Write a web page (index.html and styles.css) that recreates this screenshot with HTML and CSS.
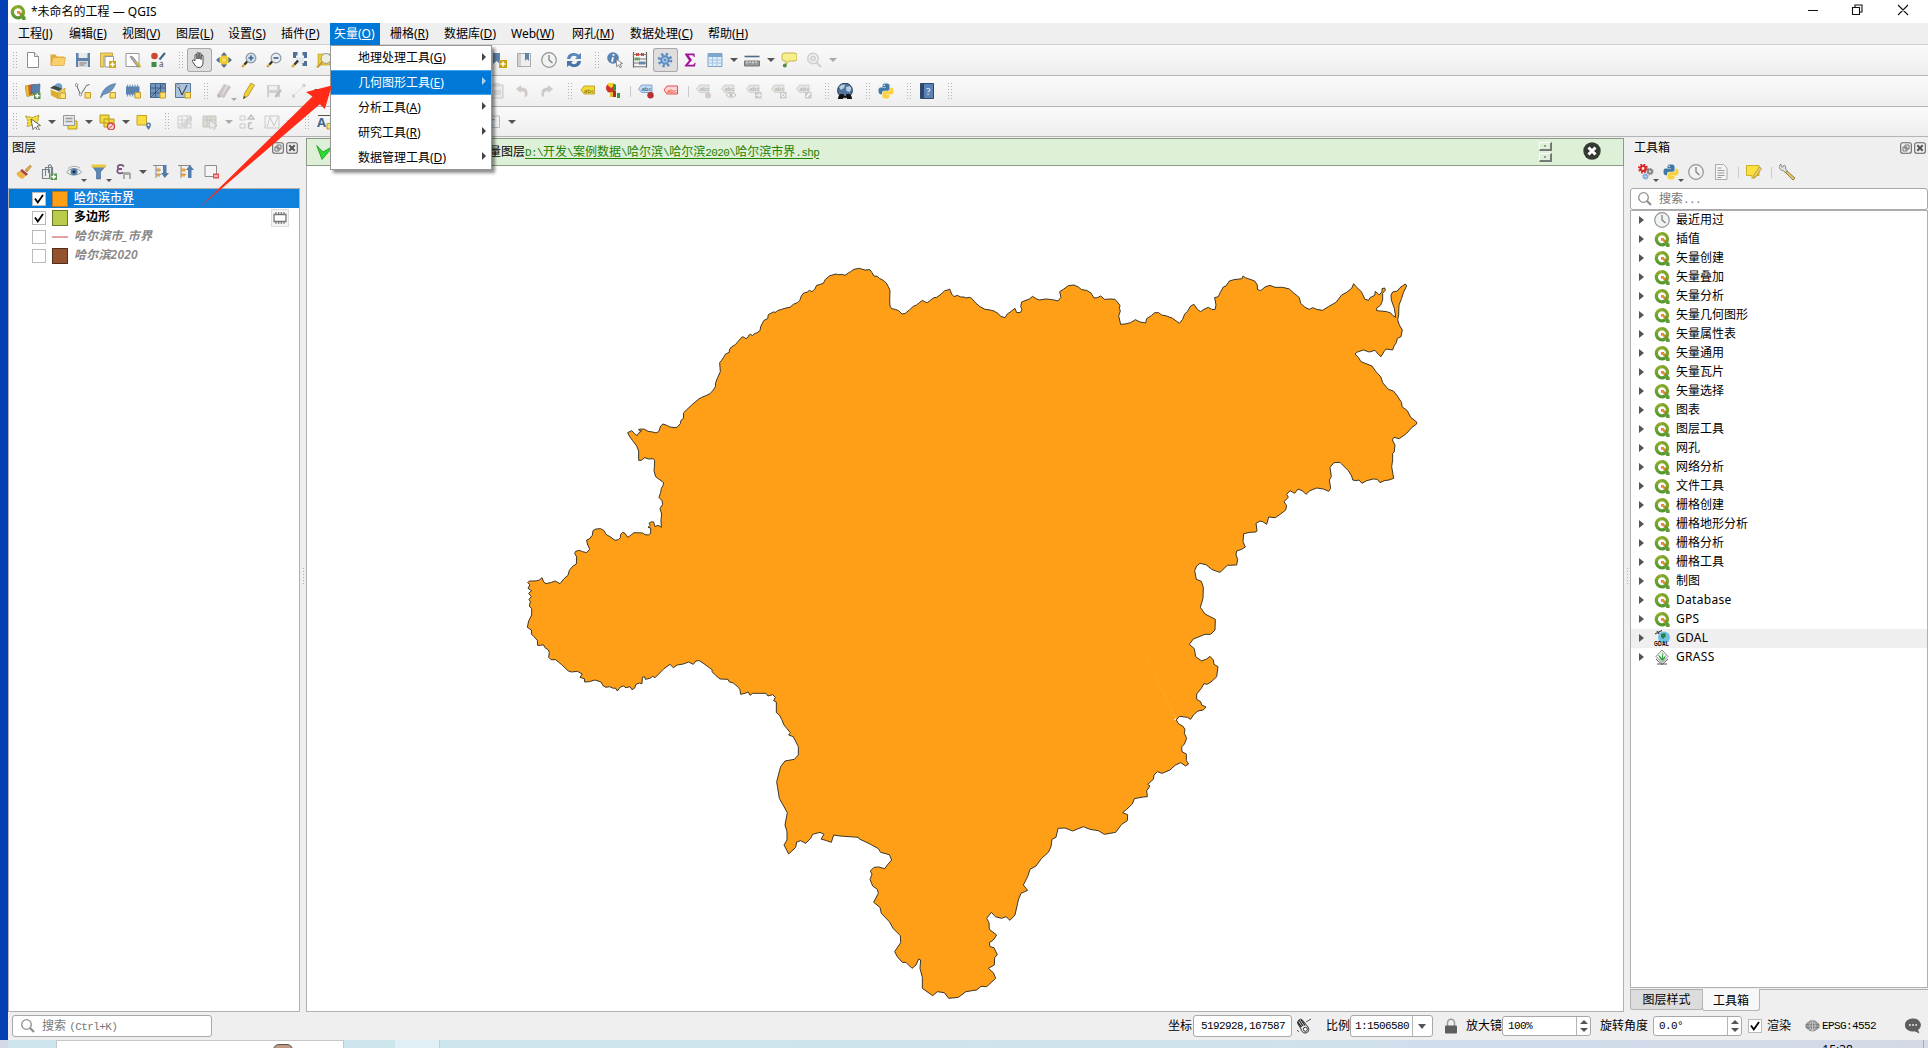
FILE: index.html
```html
<!DOCTYPE html>
<html lang="zh-CN">
<head>
<meta charset="utf-8">
<title>*未命名的工程 — QGIS</title>
<link rel="stylesheet" href="styles.css">
</head>
<body>
<svg class="defs" aria-hidden="true">
<defs>
<linearGradient id="gq" x1="0" y1="0" x2="0" y2="1"><stop offset="0" stop-color="#8fae2b"/><stop offset="1" stop-color="#55962f"/></linearGradient>
<symbol id="q" viewBox="0 0 16 16"><path d="M8 2.6a5.6 5.6 0 1 0 3 10.3" fill="none" stroke="url(#gq)" stroke-width="3.2"/><path d="M8 2.6a5.6 5.6 0 0 1 4.6 8.6" fill="none" stroke="#7fa52c" stroke-width="3.2"/><path d="M8.4 8.6h3l4.2 4.6V16h-3.2z" fill="#5f9c33"/><path d="M7 7h3.4L9.6 8.2l2 2-1 1.2-2-2L7 10z" fill="#f0822a"/></symbol>
<symbol id="new" viewBox="0 0 16 16"><path d="M2.5.5h7l4 4v11h-11z" fill="#fff" stroke="#8d8d8d"/><path d="M9.5.5v4h4" fill="#eee" stroke="#8d8d8d"/></symbol>
<symbol id="open" viewBox="0 0 16 16"><path d="M.5 13V2.5h5l1.5 2h7V13z" fill="#e0a93a"/><path d="M1 13.5l2-8h12.5l-1.5 8z" fill="#f8cf6b" stroke="#dfa53a" stroke-width=".7"/></symbol>
<symbol id="save" viewBox="0 0 16 16"><path d="M1 1h14v14H1z" fill="#5f82ab"/><path d="M3.5 1h9v5h-9z" fill="#e8eaec"/><path d="M3 9h10v6H3z" fill="#d4d8dc"/><path d="M4.5 11h7M4.5 13h5" stroke="#7d7d7d"/></symbol>
<symbol id="layout" viewBox="0 0 16 16"><path d="M.5 1h12v3H4v11H.5z" fill="#f2d35e" stroke="#b39127" stroke-width=".7"/><path d="M5 4.500h8.500V15H5z" fill="#fff" stroke="#999"/><path d="M9 9h7v7H9z" fill="#cda910"/><path d="M12.500 10.300v4.400M10.300 12.500h4.400" stroke="#fff" stroke-width="1.500"/></symbol>
<symbol id="layman" viewBox="0 0 16 16"><path d="M1 1.500h13v13H1z" fill="#fff" stroke="#999"/><path d="M5 4l3 1 6.500 8.500-1.500 2L6.500 7z" fill="#a8a8a8" stroke="#777" stroke-width=".6"/><path d="M11 10l4.500 5" stroke="#d8b43b" stroke-width="2"/></symbol>
<symbol id="style" viewBox="0 0 16 16"><circle cx="4.500" cy="4" r="3.300" fill="#d2492f"/><path d="M1.500 10h5v5h-5z" fill="#3f8a45"/><path d="M9.500 7.500L15 1" stroke="#3f6a8d" stroke-width="2.200"/><text x="9" y="15" font-size="8" fill="#444" font-family="Noto Sans">a</text></symbol>
<symbol id="hand" viewBox="0 0 16 16"><path d="M4 9V3.500a1 1 0 0 1 2 0V7 1.500a1 1 0 0 1 2 0V7 2a1 1 0 0 1 2 0v5.500V4a1 1 0 0 1 2 0v6.500c0 3-1.500 5-4 5-3 0-4-2-6.500-6.200C1 7.500 2.500 7.200 4 9z" fill="#fff" stroke="#222" stroke-width=".8"/></symbol>
<symbol id="pan" viewBox="0 0 16 16"><path d="M5 3h6v2h2v6h-2v2H5v-2H3V5h2z" fill="#edca2e"/><path d="M8 0l3 3.500H5zM8 16l3-3.500H5zM0 8l3.500-3v6zM16 8l-3.500-3v6z" fill="#4d7097"/><path d="M6.500 6.500h3v3h-3z" fill="#f9e57b"/></symbol>
<symbol id="zin" viewBox="0 0 16 16"><path d="M6.500 9.500L1 15" stroke="#d4a63d" stroke-width="2.400"/><path d="M6.500 9L3.500 12.500" stroke="#333" stroke-width="2"/><circle cx="10" cy="6" r="4.900" fill="#cfe0ef" stroke="#8b949d" stroke-width="1.100"/><path d="M7.500 6h5M10 3.500v5" stroke="#44668c" stroke-width="1.700"/></symbol>
<symbol id="zout" viewBox="0 0 16 16"><path d="M6.500 9.500L1 15" stroke="#d4a63d" stroke-width="2.400"/><path d="M6.500 9L3.500 12.500" stroke="#333" stroke-width="2"/><circle cx="10" cy="6" r="4.900" fill="#e7edf3" stroke="#8b949d" stroke-width="1.100"/><path d="M7.500 6h5" stroke="#44668c" stroke-width="1.700"/></symbol>
<symbol id="zfull" viewBox="0 0 16 16"><path d="M5 5h8v7H5z" fill="#e2e8ee"/><path d="M2 0h4.500v3.500H5V6H2zM16 0v6h-3V3.500h-1.500V0zM16 14h-4.500v-3H13V9h3z" fill="#4e7198"/><path d="M7 9l-6 6" stroke="#d4a63d" stroke-width="2.400"/><path d="M7 8.500L3.500 12.500" stroke="#333" stroke-width="2"/></symbol>
<symbol id="zsel" viewBox="0 0 16 16"><path d="M2 2h12v11H2z" fill="#e9cd38" stroke="#b89818" stroke-width=".6"/><circle cx="10" cy="6.500" r="4.900" fill="#efeee0" stroke="#9a9a92"/><path d="M6.500 10L1 15.500" stroke="#c79c38" stroke-width="2.200"/></symbol>
<symbol id="bknew" viewBox="0 0 16 16"><path d="M2 1h7v11l-3.500-3L2 12z" fill="#5f82ab"/><path d="M8 8h8v8H8z" fill="#c9a40c"/><path d="M12 9.500v5M9.500 12h5" stroke="#fff" stroke-width="1.600"/></symbol>
<symbol id="book" viewBox="0 0 16 16"><path d="M1.500 1.500h13v13h-13z" fill="#eee" stroke="#aaa"/><path d="M2 2h3v12H2z" fill="#d0d0d0"/><path d="M9 1h4v8l-2-2-2 2z" fill="#5f82ab"/></symbol>
<symbol id="clock" viewBox="0 0 16 16"><circle cx="8" cy="8" r="7.300" fill="#f1f3f3" stroke="#8e9494" stroke-width="1.200"/><path d="M8 3v5l3.500 3" fill="none" stroke="#777" stroke-width="1.200"/></symbol>
<symbol id="refresh" viewBox="0 0 16 16"><path d="M1 7c.5-4 3-6 7-6 2 0 3.500.7 4.700 1.800L15 1v6H9l2-2C8 2.800 5 4 4.500 7z" fill="#5a87ba"/><path d="M15 9c-.5 4-3 6-7 6-2 0-3.500-.7-4.700-1.800L1 15V9h6l-2 2c3 2.200 6 1 6.500-2z" fill="#4675aa"/></symbol>
<symbol id="info" viewBox="0 0 16 16"><circle cx="6" cy="6" r="5.800" fill="#5884b4"/><path d="M6.500 2v1.800M6 5.200L5 9.800" stroke="#fff" stroke-width="1.800"/><path d="M9 7l6.500 4.500-2.600.6 1.600 2.900-1.400.8-1.600-2.900-1.800 1.700z" fill="#fff" stroke="#555" stroke-width=".7"/></symbol>
<symbol id="abacus" viewBox="0 0 16 16"><path d="M1.500 0v15.500M14.500 0v15.500" stroke="#666" stroke-width="1.200"/><path d="M1 2.500h14M1 7h14M1 11h14M1 14.800h14" stroke="#777"/><path d="M4 2.500h3M9 2.500h3" stroke="#cf3c32" stroke-width="3" stroke-dasharray="1.300 .3"/><path d="M3 7h5" stroke="#4ca957" stroke-width="3" stroke-dasharray="1.400 .3"/><path d="M7 11h6" stroke="#4e7fae" stroke-width="3" stroke-dasharray="1.400 .3"/></symbol>
<symbol id="gear" viewBox="0 0 16 16"><circle cx="8" cy="8" r="5.600" fill="none" stroke="#5d8dc4" stroke-width="3.400" stroke-dasharray="2.200 2.198"/><circle cx="8" cy="8" r="3.700" fill="#a9c5e6" stroke="#5d8dc4" stroke-width="2"/><circle cx="8" cy="8" r="1.300" fill="#5d8dc4"/></symbol>
<symbol id="sigma" viewBox="0 0 16 16"><path d="M3 1.500h9.500l.3 3.500h-1c-.3-1.500-.8-1.800-2.200-1.800H6.500L10 8l-4 4.700h4.300c1.300 0 1.800-.5 2.300-2h1L13 14.500H2.800v-1L7 8.500l-4-6z" fill="#a1149b"/></symbol>
<symbol id="table" viewBox="0 0 16 16"><path d="M1 1.500h14v13H1z" fill="#dcecf9" stroke="#7fa3c4"/><path d="M1 2h14v3H1z" fill="#7da7d0"/><path d="M5.500 5v9.500M1 8h14M1 11h14M10 5v9.500" stroke="#a6c4df"/></symbol>
<symbol id="meas" viewBox="0 0 16 16"><path d="M.5 4.500h15" stroke="#4f6c89" stroke-width="1.600"/><path d="M.5 9h15v5H.5z" fill="#999" stroke="#777"/><path d="M3 9v2.500M6 9v2M9 9v2.500M12 9v2" stroke="#eee"/></symbol>
<symbol id="tip" viewBox="0 0 16 16"><path d="M3.500 1h10a2.500 2.500 0 0 1 2.500 2.500v3A2.500 2.500 0 0 1 13.500 9H8l-3 3.500L5 9H3.500A2.500 2.500 0 0 1 1 6.500v-3A2.500 2.500 0 0 1 3.500 1z" fill="#f7ee8d" stroke="#b5a436" stroke-width=".8"/><circle cx="3.800" cy="13.500" r="2" fill="#56894a"/></symbol>
<symbol id="zgray" viewBox="0 0 16 16"><circle cx="7" cy="6.500" r="5.300" fill="#eee" stroke="#cfcfcf" stroke-width="1.500"/><circle cx="7" cy="6.500" r="2" fill="none" stroke="#cfcfcf" stroke-width="1.500"/><path d="M10 10l5 5" stroke="#d0d0d0" stroke-width="2"/></symbol>
<symbol id="dsm" viewBox="0 0 16 16"><path d="M0 3l7-1 2 10-7 1.500z" fill="#efc22d" stroke="#9f7c12" stroke-width=".6"/><path d="M3 2l7-1v8l-6 4z" fill="#d2642c"/><path d="M6 2l9-1-.5 9.500L6 11z" fill="#587ea8" stroke="#3f6088" stroke-width=".6"/><path d="M9 9.500h6.500V16H9z" fill="#5a9150"/><path d="M12.200 10.500v4.500M10 12.700h4.500" stroke="#fff" stroke-width="1.600"/></symbol>
<symbol id="gpkg" viewBox="0 0 16 16"><circle cx="8.500" cy="4" r="3.800" fill="#69a0cc"/><path d="M0 5l4-2.500 8 3L9 8z" fill="#3f4d40"/><path d="M.5 6.500L8 9.500V16L1 12.500z" fill="#e0ae2f"/><path d="M8 9.500L15 5v7.500L8 16z" fill="#f1cd5f" stroke="#a97d16" stroke-width=".5"/><path d="M10 10h5.500v5.500H10z" fill="#fbe57b" stroke="#c79b20"/></symbol>
<symbol id="shp" viewBox="0 0 16 16"><path d="M1.500 2l4 10 6-9.500 3-1" fill="none" stroke="#666"/><circle cx="1.500" cy="2" r="1.400" fill="#eee" stroke="#777" stroke-width=".7"/><circle cx="5.500" cy="11.500" r="1.400" fill="#eee" stroke="#777" stroke-width=".7"/><path d="M10 9.500h5.500V15H10z" fill="#fbe06c" stroke="#c59a21"/></symbol>
<symbol id="feather" viewBox="0 0 16 16"><path d="M.5 15C2 7 7 2 15.500.5 14 6 10 10 3.500 11.500z" fill="#6a93bd" stroke="#456c96" stroke-width=".6"/><path d="M10 9.500h5.500V15H10z" fill="#fbe06c" stroke="#c59a21"/></symbol>
<symbol id="mem" viewBox="0 0 16 16"><path d="M2.500 1.500v12M5 1.500v12M7.500 1.500v12M10 1.500v12M12.500 1.500v12" stroke="#7b9dc1" stroke-width="1.200"/><path d="M1 3.500h13.500v8H1z" fill="#5b83b0"/><path d="M10 9.500h5.500V15H10z" fill="#fbe06c" stroke="#c59a21"/></symbol>
<symbol id="vgrid" viewBox="0 0 16 16"><path d="M.5.500h15v14H.5z" fill="#7598be" stroke="#46668a"/><path d="M1 5h14M1 10h14M5.500 1v13M10.500 1v13M1 14L14 1" stroke="#335276" stroke-width=".8"/><path d="M10 9.500h5.500V15H10z" fill="#fbe06c" stroke="#c59a21"/></symbol>
<symbol id="vvirt" viewBox="0 0 16 16"><path d="M.5.500h15v14H.5z" fill="#a9c4e0" stroke="#5a7797"/><path d="M3 3l4 9 5-10" fill="none" stroke="#333"/><circle cx="3" cy="3" r="1.300" fill="#fff" stroke="#555" stroke-width=".6"/><path d="M10 9.500h5.500V15H10z" fill="#fbe06c" stroke="#c59a21"/></symbol>
<symbol id="edits" viewBox="0 0 16 16"><path d="M1 12L8 1l3 1-6 11zM5 14L12 2l3 2-7 11z" fill="#cbc5c4"/><path d="M1 11l5 2-4 2z" fill="#b9b2b1"/></symbol>
<symbol id="pencil" viewBox="0 0 16 16"><path d="M3.500 10.500L10 0l3.500 2.200L7 13l-4.500 2.800z" fill="#f0cf3c" stroke="#a58515" stroke-width=".7"/><path d="M3 13l2 1-3 2z" fill="#444"/></symbol>
<symbol id="savg" viewBox="0 0 16 16"><path d="M1 2h13v12H1z" fill="#d0d0d0"/><path d="M3 3h8v4H3zM3 10h7v4H3z" fill="#efefef"/><path d="M9.500 14l5.500-7" stroke="#c0bab9" stroke-width="2.200"/></symbol>
<symbol id="nodes" viewBox="0 0 16 16"><path d="M2 13L13 2.500" stroke="#cbcbcb" stroke-dasharray="2 1.500"/><circle cx="2.500" cy="13" r="1.700" fill="#cfcfcf"/><circle cx="13" cy="2.500" r="1.700" fill="#cfcfcf"/></symbol>
<symbol id="paste" viewBox="0 0 16 16"><path d="M2 2h12v13H2z" fill="#eaeaea" stroke="#c6c6c6"/><path d="M5 0h6v3.500H5zM5 7h7v5H5z" fill="#d6d6d6"/></symbol>
<symbol id="undo" viewBox="0 0 16 16"><path d="M2 6l5-4v2.500c5 0 7 2 6.500 7.500-1 2-3 2-3 2 1.500-4-.5-6-3.500-6V10z" fill="#d0cac8"/></symbol>
<symbol id="redo" viewBox="0 0 16 16"><path d="M14 6L9 2v2.500c-5 0-7 2-6.500 7.500 1 2 3 2 3 2C4 10 6 8 9 8v2z" fill="#c9cecb"/></symbol>
<symbol id="lab" viewBox="0 0 16 16"><path d="M1 7l3-4h10.500v8H4z" fill="#f4d936" stroke="#a98e11" stroke-width=".7"/><text x="4" y="9.500" font-size="6" fill="#7b6200" font-family="Noto Sans">abc</text></symbol>
<symbol id="diag" viewBox="0 0 16 16"><circle cx="6" cy="5" r="5" fill="#d0312b"/><path d="M6 5L2 1.500A5 5 0 0 1 10 2z" fill="#f1d429"/><path d="M8 1l3 .5V7L8 9z" fill="#37913c"/><path d="M5 9h3v5H5z" fill="#e5bd25"/><path d="M8 8h3v6H8z" fill="#af2924"/><path d="M12 10h3v5h-3z" fill="#3b9440"/></symbol>
<symbol id="labb" viewBox="0 0 16 16"><path d="M.5 6l3-4H14v7.500H3.500z" fill="#c1dbf4" stroke="#5c8cba" stroke-width=".7"/><text x="3.500" y="8" font-size="6" fill="#345" font-family="Noto Sans">abc</text><circle cx="12.500" cy="12.300" r="3.200" fill="#b82e35"/></symbol>
<symbol id="labr" viewBox="0 0 16 16"><path d="M1 7l3-4h10.500v8H4z" fill="#fbd6d4" stroke="#ec4b4b"/><text x="4" y="9.500" font-size="6" fill="#e33" font-family="Noto Sans">abc</text></symbol>
<symbol id="labg" viewBox="0 0 16 16"><path d="M.5 6l3-4H13v7.500H3.500z" fill="#e4e4e0" stroke="#c7c7c3" stroke-width=".7"/><text x="3.500" y="8" font-size="6" fill="#aaa" font-family="Noto Sans">abc</text></symbol>
<symbol id="globe" viewBox="0 0 16 16"><circle cx="8" cy="7.500" r="7.400" fill="#50749b" stroke="#273b51"/><path d="M2 4l3-2.500 3 .5-1 3-3 2zM9 4l4-1 1.500 3-2 3-3-1z" fill="#b8cde1"/><path d="M1 16c0-3 1.500-5 3.500-5h2l.6 2h1.800l.6-2h2c2 0 3.500 2 3.500 5h-5l-.5-2h-3L6 16z" fill="#111"/></symbol>
<symbol id="py" viewBox="0 0 16 16"><path d="M4.500 4V2.500C4.500.8 6 .5 8 .5s3.500.5 3.500 2v3.300c0 1.200-.8 1.900-1.800 1.900H6c-1.500 0-2 1-2 2v1.500H2.500C1 11.200.5 9.500.5 7.800S1 4.500 2.500 4.500H8V4z" fill="#3f77a7"/><path d="M11.500 12v1.500c0 1.700-1.500 2-3.500 2s-3.500-.5-3.500-2v-3.300c0-1.200.8-1.900 1.800-1.900H10c1.500 0 2-1 2-2V4.800h1.500c1.500 0 2 1.700 2 3.400s-.5 3.300-2 3.300H8v.5z" fill="#f9d13e"/><circle cx="6.200" cy="2.300" r=".8" fill="#fff"/></symbol>
<symbol id="help" viewBox="0 0 16 16"><path d="M1.500.5h13v15h-13z" fill="#5a82b5" stroke="#2f4a6c"/><path d="M2 1h3v14H2z" fill="#2d4768"/><text x="7" y="12" font-size="10" fill="#fff" font-family="Liberation Serif">?</text></symbol>
<symbol id="sel" viewBox="0 0 16 16"><path d="M.5 2l7 1.500L14 1l-1 6-2 3.500-9 2L3 7z" fill="#f3da3a" stroke="#8f7b18" stroke-width=".8" stroke-dasharray="2 1"/><path d="M6 5l9.500 6.500-3.500.5 2.500 3.500-1.800 1-2.200-3.600-2.500 2.600z" fill="#fff" stroke="#444" stroke-width=".8"/></symbol>
<symbol id="selv" viewBox="0 0 16 16"><path d="M6 7h9v8H6z" fill="#f4da3a" stroke="#b89c1f"/><path d="M1.500 1.500h11v10h-11z" fill="#e5e7e9" stroke="#999"/><path d="M3.500 4.500h7M3.500 7.500h7" stroke="#999" stroke-width="1.300"/></symbol>
<symbol id="desel" viewBox="0 0 16 16"><path d="M1 1h9v8H1zM5 5h10v8H5z" fill="#f5db3d" stroke="#b3981e"/><circle cx="12" cy="12.500" r="3.500" fill="#f2dada" stroke="#cf3d3d" stroke-width="1.300"/><path d="M9.800 14.800l4.500-4.500" stroke="#cf3d3d"/></symbol>
<symbol id="selloc" viewBox="0 0 16 16"><path d="M1 1.500h9.500v9.500H1z" fill="#f8dd43" stroke="#c6a31e"/><path d="M12.500 16c-1.500-2.500-2.500-3.500-2.500-5a2.500 2.500 0 0 1 5 0c0 1.500-1 2.500-2.500 5z" fill="#587da5"/><circle cx="12.500" cy="11" r="1" fill="#fff"/></symbol>
<symbol id="dgrid" viewBox="0 0 16 16"><path d="M1 2h13v12H1zM1 6h13M1 10h13M5 2v12M10 2v12M1 14L14 2" fill="none" stroke="#cfcfcf"/><path d="M6 12l7-9 2 1.500-7 9z" fill="#ddd8d5" stroke="#c4c0be" stroke-width=".6"/></symbol>
<symbol id="dsel" viewBox="0 0 16 16"><path d="M1 2h13v11H1z" fill="#dcdcd6" stroke="#c6c6c2"/><path d="M1 6h13M5 2v11M9 2v11" stroke="#c5c5c0"/><path d="M7 6l8 6-3 .5 1.500 2.500-1.500 1-1.800-3-2 2z" fill="#eee" stroke="#bbb" stroke-width=".7"/></symbol>
<symbol id="dcalc" viewBox="0 0 16 16"><path d="M1 2h5v4H1zM1 10h5v4H1z" fill="none" stroke="#cacaca"/><path d="M12 1l3 4H9zM9 5h6M13 9c-4-1-5 2-2 2.500-3 1-2 4 3 3" fill="none" stroke="#bfbfbf" stroke-width="1.300"/></symbol>
<symbol id="dv" viewBox="0 0 16 16"><path d="M1 2h14v12H1zM3 13L6 3l4 9 4-9" fill="none" stroke="#c9c9c9"/></symbol>
<symbol id="anno" viewBox="0 0 16 16"><text x="0" y="13" font-size="13" font-weight="bold" fill="#456a92" font-family="Noto Sans">A</text><path d="M1 1.500h12" stroke="#555"/><path d="M10 9.500h5.500V15H10z" fill="#fbe06c" stroke="#c59a21"/></symbol>
<symbol id="tee" viewBox="0 0 16 16"><path d="M0 2h14.500v11.500H0z" fill="#f3f3f3" stroke="#b9bec3"/><text x="3" y="12" font-size="11" fill="#687887" font-family="Liberation Serif">T</text></symbol>
<symbol id="brush" viewBox="0 0 16 16"><path d="M9 6l5-5 1.500 1.500L11 8z" fill="#e2a84f" stroke="#a9732a" stroke-width=".5"/><path d="M6 5l6 5-2 2-6-5z" fill="#a8483c"/><path d="M3.500 7l6 5-3 3c-1.500-.5-3-1-3-2-2-.5-2.500-1.800-3-4z" fill="#ecb544"/></symbol>
<symbol id="addgrp" viewBox="0 0 16 16"><path d="M1.500 5.500h7v9h-7zM4.500 3v9M4.500 3.500h7V12M7.500 1v8M7.500 1.500c2-1.500 3 0 3 1.500v7" fill="none" stroke="#77828a" stroke-width="1.100"/><path d="M9.500 9.500H16V16H9.500z" fill="#5b9753"/><path d="M12.700 10.500v4.500M10.500 12.700H15" stroke="#fff" stroke-width="1.500"/></symbol>
<symbol id="eye" viewBox="0 0 16 16"><path d="M.5 8C4 3.500 12 3.500 15.500 8 12 12 4 12 .5 8z" fill="#eee" stroke="#959ca3"/><circle cx="8" cy="7.800" r="3.500" fill="#5580ac"/><circle cx="8" cy="7.800" r="1.500" fill="#1d3045"/><path d="M2 4.500C6 1.500 11 2 14 4" fill="none" stroke="#aaa"/></symbol>
<symbol id="funnel" viewBox="0 0 16 16"><path d="M1 2h13.500L9.500 8v7h-4V8z" fill="#5a86b6" stroke="#3e668f" stroke-width=".6"/><path d="M.5.500h14.500v3H.5z" fill="#edca37"/></symbol>
<symbol id="eps" viewBox="0 0 16 16"><path d="M8 2.500C5-.5 0 1 2.500 5 0 7 1.500 11 7.500 8.700M2.500 5H6" fill="none" stroke="#7d5480" stroke-width="1.800"/><path d="M8 15v-5h6v5M8 9h6" fill="none" stroke="#aaa" stroke-width="2"/></symbol>
<symbol id="expand" viewBox="0 0 16 16"><path d="M0 1.500h13M3 1.500V14M3 6h5M3 10.500h5" stroke="#8a8a8a" fill="none"/><path d="M4 4.500h3v3H4zM4 9.500h3v3H4z" fill="#e8a33d"/><path d="M10 1h3.500v8H16l-4.200 5L8 9h2z" fill="#537da9"/></symbol>
<symbol id="collapse" viewBox="0 0 16 16"><path d="M0 1.500h13M3 1.500V14M3 6h5M3 10.500h5" stroke="#8a8a8a" fill="none"/><path d="M4 4.500h3v3H4zM4 9.500h3v3H4z" fill="#e8a33d"/><path d="M10 14h3.500V6H16l-4.200-5L8 6h2z" fill="#537da9"/></symbol>
<symbol id="remove" viewBox="0 0 16 16"><path d="M2 1.500h11.500v11H2z" fill="#f5f5f5" stroke="#8d8d8d"/><path d="M10 9.500h6v5h-6z" fill="#ea4e4e"/><path d="M11.200 12h3.600" stroke="#fff" stroke-width="1.300"/></symbol>
<symbol id="gears" viewBox="0 0 16 16"><circle cx="5" cy="4.500" r="3.700" fill="none" stroke="#d62525" stroke-width="2.600" stroke-dasharray="1.600 1.306"/><circle cx="5" cy="4.500" r="2.500" fill="none" stroke="#d62525" stroke-width="2.200"/><circle cx="12" cy="7.500" r="2" fill="none" stroke="#888" stroke-width="2"/><circle cx="12" cy="7.500" r="3" fill="none" stroke="#888" stroke-width="1.300" stroke-dasharray="1 1.350"/><circle cx="7.500" cy="12.500" r="1.700" fill="none" stroke="#8eaedb" stroke-width="2"/><circle cx="7.500" cy="12.500" r="2.700" fill="none" stroke="#8eaedb" stroke-width="1.300" stroke-dasharray="1 1.120"/></symbol>
<symbol id="doc" viewBox="0 0 16 16"><path d="M2.500.500h8l3.500 3.500v11.500H2.500z" fill="#f5f5f5" stroke="#aaa"/><path d="M4.500 4h4M4.500 6.500h7M4.500 9h7M4.500 11.500h7M4.500 13.500h4" stroke="#999"/></symbol>
<symbol id="note" viewBox="0 0 16 16"><path d="M.5 1.500H13v10H9l-3 3v-3H.5z" fill="#fbe13f" stroke="#cfaf23"/><path d="M8 11l5.500-8L15.500 4.500 10 13l-2.500 1.500z" fill="#edd05d" stroke="#8f7b34" stroke-width=".6"/></symbol>
<symbol id="wrench" viewBox="0 0 16 16"><path d="M0 2l2-2 .3 2.700 1.700.3L5 1c2 1 2 3 1.500 4l1.700 1.800-2 2L4.500 6.500C2.500 7 .5 5.500 0 2z" fill="#e1e1e1" stroke="#777" stroke-width=".8"/><path d="M8 7l8 7-2 2-7.500-7.500z" fill="#e5c766" stroke="#7b6630" stroke-width=".8"/></symbol>
<symbol id="mag" viewBox="0 0 16 16"><circle cx="6.500" cy="6.500" r="4.800" fill="none" stroke="#8f8f8f" stroke-width="1.300"/><path d="M10 10l4 4" stroke="#8f8f8f" stroke-width="2.200"/></symbol>
<symbol id="float" viewBox="0 0 12 12"><rect x=".7" y=".7" width="10.600" height="10.600" rx="2" fill="none" stroke="#666" stroke-width="1.100"/><path d="M5 3h4v4H5zM3 5h4v4H3z" fill="#efefef" stroke="#666" stroke-width=".9"/></symbol>
<symbol id="close" viewBox="0 0 12 12"><rect x=".7" y=".7" width="10.600" height="10.600" rx="2" fill="none" stroke="#666" stroke-width="1.100"/><path d="M3.300 3.300l5.400 5.400M8.700 3.300L3.300 8.700" stroke="#555" stroke-width="2"/></symbol>
<symbol id="chip" viewBox="0 0 16 16"><path d="M4 2v12M6.700 2v12M9.300 2v12M12 2v12" stroke="#777" stroke-width="1.200"/><path d="M2 4.500h12v7H2z" fill="#fff" stroke="#777" stroke-width="1.300"/></symbol>
<symbol id="gdal" viewBox="0 0 16 16"><circle cx="10" cy="7.500" r="6" fill="#6fc3e2"/><path d="M7 4l4-1 1 3-3 3-2-2z" fill="#2f7d4c"/><path d="M1 4L8 .5M3 1l2 3" stroke="#444" stroke-width="1.300"/><text x="0" y="15.500" font-size="8" font-weight="bold" textLength="15" lengthAdjust="spacingAndGlyphs" fill="#000" font-family="Liberation Sans">GDAL</text></symbol>
<symbol id="grass" viewBox="0 0 16 16"><path d="M8 1l6 6.500-6 6-6-6z" fill="#f4fbf2" stroke="#777" stroke-width=".9"/><path d="M2 10l6 5.500L14 10M3 15h10" fill="none" stroke="#555"/><path d="M8 12C6 10 5 7.500 4 6c2 .5 3 2 4 3.500C8 7 8 5 9 3c.5 3 0 5-.3 6.500L12 6c-.5 3-2 5-4 6z" fill="#2f9a3e"/></symbol>
<symbol id="mouse" viewBox="0 0 16 16"><path d="M2 3c2-3 4-2 6 1l4 5c2 3 0 6-3 6-2 0-4-2-4-4L2 6z" fill="#e8e8e4" stroke="#333"/><path d="M3 2l4 6M5 1.500l4 6M1.500 4l4 5" stroke="#222" stroke-width="1.300"/><circle cx="9.300" cy="11.300" r="2" fill="#fff" stroke="#333"/><path d="M10 4l5-3M3 14L1 12" stroke="#555"/></symbol>
<symbol id="lock" viewBox="0 0 12 16"><path d="M2.500 8V5a3.500 3.800 0 0 1 7 0v3" fill="none" stroke="#9a9a9a" stroke-width="1.500"/><rect y="7.500" width="12" height="8" rx="1" fill="#5e5e5e"/></symbol>
<symbol id="crs" viewBox="0 0 16 16"><path d="M8 1C13 3 15 5 16 8c-1 3-4 5-8 6-4-1-7-3-8-6 1-3 3-5 8-7z" fill="#7c7c7c"/><path d="M0 8h16M2 4.800h12M2 11.200h12M8 1v13M8 1C4 5 4 10 8 14M8 1c4 4 4 9 0 13" fill="none" stroke="#ddd" stroke-width=".7"/></symbol>
<symbol id="chat" viewBox="0 0 16 16"><path d="M8 .5a7.800 6.500 0 0 1 5 11.500l1.500 3.500L9.500 13.300A7.800 6.500 0 1 1 8 .5z" fill="#5e5e5e"/><path d="M4 7h1.700M7.200 7h1.700M10.400 7H12" stroke="#fff" stroke-width="1.700"/></symbol>
<symbol id="ok" viewBox="0 0 18 16"><path d="M.7 1.500L7 8 18 1.500 6 15.500z" fill="#29dc2d" stroke="#138a18" stroke-width=".7"/></symbol>
</defs>
</svg>

<div class="screen">
<div class="desktop"></div>
<div class="window">
  <header class="title"><svg class="i"><use href="#q"/></svg><span>*未命名的工程 — QGIS</span>
    <svg class="wbtn" viewBox="0 0 110 14"><path d="M0 7.500h10M44.500 4.500h7v7h-7zM47 4.500v-2.500h7v7h-2.500M90 2l10 10M100 2L90 12" fill="none" stroke="#111" stroke-width="1.100"/></svg>
  </header>
  <nav class="menubar">
    <span>工程(<u>J</u>)</span><span>编辑(<u>E</u>)</span><span>视图(<u>V</u>)</span><span>图层(<u>L</u>)</span><span>设置(<u>S</u>)</span><span>插件(<u>P</u>)</span><span class="active">矢量(<u>O</u>)</span><span>栅格(<u>R</u>)</span><span>数据库(<u>D</u>)</span><span>Web(<u>W</u>)</span><span>网孔(<u>M</u>)</span><span>数据处理(<u>C</u>)</span><span>帮助(<u>H</u>)</span>
  </nav>
  <div class="bar">
    <i class="h first"></i><b><svg class="i"><use href="#new"/></svg></b><b><svg class="i"><use href="#open"/></svg></b><b><svg class="i"><use href="#save"/></svg></b><b><svg class="i"><use href="#layout"/></svg></b><b><svg class="i"><use href="#layman"/></svg></b><b><svg class="i"><use href="#style"/></svg></b>
    <i class="h"></i><b class="on"><svg class="i"><use href="#hand"/></svg></b><b><svg class="i"><use href="#pan"/></svg></b><b><svg class="i"><use href="#zin"/></svg></b><b><svg class="i"><use href="#zout"/></svg></b><b><svg class="i"><use href="#zfull"/></svg></b><b><svg class="i"><use href="#zsel"/></svg></b>
    <i class="gap1"></i><b><svg class="i"><use href="#bknew"/></svg></b><b><svg class="i"><use href="#book"/></svg></b><b><svg class="i"><use href="#clock"/></svg></b><b><svg class="i"><use href="#refresh"/></svg></b>
    <i class="h"></i><b><svg class="i"><use href="#info"/></svg></b><b><svg class="i"><use href="#abacus"/></svg></b><b class="on"><svg class="i"><use href="#gear"/></svg></b><b><svg class="i"><use href="#sigma"/></svg></b><b class="dd"><svg class="i"><use href="#table"/></svg></b><b class="dd"><svg class="i"><use href="#meas"/></svg></b><b><svg class="i"><use href="#tip"/></svg></b><b class="dd off"><svg class="i"><use href="#zgray"/></svg></b>
  </div>
  <div class="bar">
    <i class="h first"></i><b><svg class="i"><use href="#dsm"/></svg></b><b><svg class="i"><use href="#gpkg"/></svg></b><b><svg class="i"><use href="#shp"/></svg></b><b><svg class="i"><use href="#feather"/></svg></b><b><svg class="i"><use href="#mem"/></svg></b><b><svg class="i"><use href="#vgrid"/></svg></b><b><svg class="i"><use href="#vvirt"/></svg></b>
    <i class="h"></i><b class="mini off"><svg class="i"><use href="#edits"/></svg></b><b><svg class="i"><use href="#pencil"/></svg></b><b><svg class="i"><use href="#savg"/></svg></b><b class="dd"><svg class="i"><use href="#nodes"/></svg></b>
    <i class="gap2"></i><b><svg class="i"><use href="#paste"/></svg></b><b><svg class="i"><use href="#undo"/></svg></b><b><svg class="i"><use href="#redo"/></svg></b>
    <i class="h"></i><b><svg class="i"><use href="#lab"/></svg></b><b><svg class="i"><use href="#diag"/></svg></b><i class="sep"></i><b><svg class="i"><use href="#labb"/></svg></b><b><svg class="i"><use href="#labr"/></svg></b><i class="sep"></i>
    <b><svg class="i" viewBox="0 0 16 16"><use href="#labg"/><circle cx="12" cy="12.500" r="3" fill="#d3cbcb"/></svg></b><b><svg class="i" viewBox="0 0 16 16"><use href="#labg"/><path d="M5 12c3-3 8-3 10 0-3 3-7 3-10 0z" fill="#f4f4f4" stroke="#bbb"/><circle cx="10" cy="12" r="1.500" fill="#bbb"/></svg></b><b><svg class="i" viewBox="0 0 16 16"><use href="#labg"/><path d="M9 9h6.500v6.500H9z" fill="#c9c9c9"/><path d="M10 12.200h4M12.500 10.500l2 1.700-2 1.700" stroke="#fff" fill="none"/></svg></b><b><svg class="i" viewBox="0 0 16 16"><use href="#labg"/><path d="M9 9h6.500v6.500H9z" fill="#c9c9c9"/><circle cx="12.200" cy="12.200" r="1.700" stroke="#fff" fill="none"/></svg></b><b><svg class="i" viewBox="0 0 16 16"><use href="#labg"/><path d="M9 9h6.500v6.500H9z" fill="#c9c9c9"/><path d="M10.500 14l3.500-4" stroke="#fff" stroke-width="1.500"/></svg></b>
    <i class="h"></i><b><svg class="i"><use href="#globe"/></svg></b><i class="h"></i><b><svg class="i"><use href="#py"/></svg></b><i class="h"></i><b><svg class="i"><use href="#help"/></svg></b><i class="h"></i>
  </div>
  <div class="bar last">
    <i class="h first"></i><b class="dd"><svg class="i"><use href="#sel"/></svg></b><b class="dd"><svg class="i"><use href="#selv"/></svg></b><b class="dd"><svg class="i"><use href="#desel"/></svg></b><b><svg class="i"><use href="#selloc"/></svg></b>
    <i class="h"></i><b><svg class="i"><use href="#dgrid"/></svg></b><b class="dd off"><svg class="i"><use href="#dsel"/></svg></b><b><svg class="i"><use href="#dcalc"/></svg></b><b class="dd off"><svg class="i"><use href="#dv"/></svg></b>
    <i class="h"></i><b><svg class="i"><use href="#anno"/></svg></b><i class="gap3"></i><b class="dd"><svg class="i"><use href="#tee"/></svg></b>
  </div>

  <main class="work">
    <section class="layers">
      <div class="docktitle"><span>图层</span><svg><use href="#float"/></svg><svg><use href="#close"/></svg></div>
      <div class="dockbar"><b><svg class="i"><use href="#brush"/></svg></b><b><svg class="i"><use href="#addgrp"/></svg></b><b class="mini"><svg class="i"><use href="#eye"/></svg></b><b class="mini"><svg class="i"><use href="#funnel"/></svg></b><b class="dd"><svg class="i"><use href="#eps"/></svg></b><b><svg class="i"><use href="#expand"/></svg></b><b><svg class="i"><use href="#collapse"/></svg></b><b><svg class="i"><use href="#remove"/></svg></b></div>
      <div class="tree">
        <div class="row picked"><i class="cb"><svg viewBox="0 0 12 12"><path d="M2 5.500l2.800 4L10 2" fill="none" stroke="#000" stroke-width="1.800"/></svg></i><i class="sw orange"></i><span>哈尔滨市界</span></div>
        <div class="row bold"><i class="cb"><svg viewBox="0 0 12 12"><path d="M2 5.500l2.800 4L10 2" fill="none" stroke="#000" stroke-width="1.800"/></svg></i><i class="sw green"></i><span>多边形</span><em><svg class="i"><use href="#chip"/></svg></em></div>
        <div class="row dim"><i class="cb"></i><i class="sw line"></i><span>哈尔滨市_市界</span></div>
        <div class="row dim"><i class="cb"></i><i class="sw brown"></i><span>哈尔滨2020</span></div>
      </div>
    </section>
    <div class="split"></div>
    <section class="map">
      <div class="msg"><svg class="i ok"><use href="#ok"/></svg><span class="txt">矢量图层</span><a><span class="m">D:\</span>开发<span class="m">\</span>案例数据<span class="m">\</span>哈尔滨<span class="m">\</span>哈尔滨<span class="m">2020\</span>哈尔滨市界<span class="m">.shp</span></a><div class="spin"><i></i><i></i></div>
        <svg class="x" viewBox="0 0 18 18"><circle cx="9" cy="9" r="8.700" fill="#333a32"/><path d="M5.500 5.500l7 7M12.500 5.500l-7 7" stroke="#fff" stroke-width="3"/></svg></div>
      <svg class="canvas" viewBox="307 166 1316 845">
        <path d="M980 310L1172 717.500 784.500 717.500z" fill="#ff9f18" stroke="#ff9f18" stroke-width="6" stroke-linejoin="round"/>
        <g fill="#ff9f18" stroke="#3b3526" stroke-width="3" stroke-linejoin="round">
        <path transform="translate(500 240) scale(.33333)" d="M1440 200L1428 190 1415 175 1408 172 1398 174 1392 171 1382 171 1372 166 1362 170 1355 162 1349 147 1344 150 1334 152 1324 162 1310 172 1302 173 1292 180 1282 188 1275 186 1268 181 1258 188 1250 195 1240 199 1228 210 1216 220 1206 222 1196 212 1186 208 1175 206 1170 198 1169 180 1170 152 1165 140 1158 128 1148 120 1138 115 1132 109 1122 108 1116 98 1110 89 1095 90 1078 85 1062 88 1052 95 1045 99 1035 106 1025 103 1015 104 1008 102 990 107 976 118 970 130 962 133 950 136 944 148 936 155 928 151 922 156 910 160 904 168 899 182 892 188 880 193 870 202 858 204 845 208 832 212 828 217 820 216 805 224 803 236 792 241 787 250 782 260 780 272 770 279 764 280 758 287 752 283 746 286 744 292 738 296 732 292 727 290 718 300 706 314 694 321 688 330 688 337 677 342 670 353 664 362 659 368 661 395 652 415 647 428 646 440 640 450 630 461 618 467 605 472 595 478 575 495 551 518 550 536 543 541 541 551 531 562 522 563 510 561 500 556 489 552 482 558 476 575 468 579 458 576 444 574 434 568 428 567 416 568 418 572 425 573 416 579 411 587 404 581 395 572 383 578 388 588 398 602 410 618 416 633 416 661 424 661 434 653 446 657 460 656 464 662 463 682 462 692 467 710 475 716 491 728 489 737 484 745 482 757 477 772 486 782 488 793 480 806 485 822 483 840 484 862 477 857 471 857 465 860 461 846 455 845 447 850 451 856 444 862 452 864 452 880 445 885 435 884 428 879 402 878 392 886 383 892 375 880 368 877 362 883 361 893 355 899 345 901 333 892 318 883 312 872 302 866 288 867 279 872 277 886 268 897 260 900 262 912 269 928 260 938 248 935 238 931 227 934 224 940 230 951 229 972 218 979 208 991 204 1006 192 1016 180 1031 165 1023 155 1027 138 1031 131 1026 126 1013 118 1020 108 1023 88 1023 83 1028 90 1034 84 1045 95 1052 86 1060 94 1070 87 1078 91 1085 88 1098 95 1106 95 1125 86 1143 82 1162 94 1170 95 1183 102 1190 112 1201 113 1216 122 1216 130 1214 135 1223 145 1230 148 1237 146 1252 153 1259 167 1259 175 1266 185 1274 205 1293 215 1296 232 1294 247 1302 240 1312 253 1316 254 1326 268 1325 285 1320 303 1326 310 1338 318 1342 328 1340 340 1345 346 1344 352 1353 360 1342 370 1338 378 1343 390 1340 396 1349 404 1344 408 1333 418 1329 426 1331 427 1312 434 1310 436 1318 450 1315 458 1309 465 1313 482 1296 492 1286 510 1273 520 1283 532 1275 550 1272 566 1266 580 1273 588 1263 598 1262 612 1271 625 1281 637 1290 636 1295 648 1307 660 1317 684 1318 688 1326 700 1329 715 1342 720 1349 722 1363 735 1360 745 1356 750 1366 758 1360 775 1360 798 1360 804 1368 818 1364 826 1372 821 1382 829 1386 829 1418 838 1425 845 1438"/>
        <path transform="translate(960 240) scale(.33333)" d="M60 200L75 208 90 210 102 213 115 221 122 229 135 233 142 222 152 215 165 205 170 218 182 217 186 208 182 200 185 186 195 182 208 177 218 169 228 176 238 180 258 177 278 179 294 183 303 172 299 155 310 148 325 137 342 135 355 141 365 149 380 151 393 159 402 174 412 173 422 168 434 178 450 177 465 178 472 186 480 196 478 205 481 213 476 228 482 253 495 252 512 248 526 239 540 246 557 249 560 236 575 226 584 218 596 218 605 225 620 228 638 235 658 250 668 238 674 222 682 215 692 198 702 193 712 208 722 215 732 208 745 202 755 208 765 209 768 195 764 173 775 170 782 155 790 141 798 138 808 123 822 119 846 116 849 108 856 113 884 123 892 135 892 148 902 152 915 141 930 136 945 142 968 142 988 147 1000 158 1018 173 1022 190 1035 202 1048 208 1058 203 1070 208 1088 211 1105 200 1128 187 1145 165 1160 157 1175 145 1181 131 1190 142 1204 155 1215 178 1226 181 1230 173 1244 166 1246 154 1258 165 1266 155 1266 146 1274 144 1276 150 1268 160 1268 180 1262 195 1250 205 1250 212 1262 213 1280 215 1292 219 1298 226 1307 232 1303 205 1294 180 1293 165 1298 156 1312 153 1320 143 1336 132 1340 138 1330 158 1325 175 1317 195 1316 225 1313 240 1318 255 1327 270 1323 290 1312 295 1309 308 1302 318 1298 330 1278 327 1272 335 1263 350 1255 343 1245 331 1228 336 1210 330 1190 337 1185 342 1195 352 1203 365 1218 371 1236 378 1248 395 1262 410 1268 428 1285 448 1300 453 1310 465 1325 488 1326 500 1342 512 1352 532 1370 546 1370 552 1355 563 1340 580 1318 596 1302 592 1297 600 1305 615 1303 635 1298 640 1298 660 1295 680 1301 715 1287 720 1273 722 1260 728 1252 718 1240 717 1220 722 1206 730 1197 720 1188 722 1178 720 1175 708 1165 692 1145 672 1140 667 1122 668 1110 682 1114 710 1108 720 1112 745 1106 754 1090 747 1070 744 1050 752 1038 763 1028 753 1014 747 1004 760 990 752 980 763 985 772 972 785 980 797 977 810 962 822 946 833 926 831 920 853 910 846 900 843 888 850 891 872 888 876 870 877 851 881 849 905 856 921 845 928 830 933 828 945 833 958 830 975 802 976 780 997 770 994 755 988 738 974 720 970 710 978 704 992 709 1018 724 1024 730 1042 729 1075 721 1102 735 1122 766 1138 765 1170 752 1183 735 1183 700 1197 688 1213 703 1226 707 1250 725 1263 740 1257 750 1249 760 1260 762 1273 774 1280 770 1310 758 1322 742 1333 732 1331 724 1345 710 1362 710 1378 722 1385 725 1395 738 1401 730 1410 714 1413 700 1425 692 1438 682 1432 658 1429 649 1440"/>
        <path transform="translate(760 640) scale(.33333)" d="M1249 240L1256 252 1268 258 1275 268 1273 280 1280 295 1273 313 1265 320 1266 335 1279 342 1279 362 1286 372 1277 378 1262 368 1245 376 1230 390 1206 400 1192 395 1182 405 1180 418 1163 433 1170 438 1160 452 1162 470 1150 471 1123 476 1117 492 1100 508 1088 518 1103 524 1102 542 1085 553 1067 577 1033 583 1015 572 990 568 970 560 938 573 915 564 894 565 888 592 876 598 873 620 865 637 845 655 828 678 810 688 803 710 790 735 803 751 783 760 775 780 765 825 750 841 738 830 725 835 706 830 694 817 680 835 687 848 688 868 710 885 700 900 688 908 690 920 702 923 712 945 704 952 703 975 685 985 700 998 707 1015 680 1040 663 1039 650 1050 618 1055 595 1072 566 1075 553 1058 532 1055 518 1067 487 1045 487 1012 480 985 482 960 476 957 468 975 456 985 438 967 427 967 412 950 404 935 422 908 421 887 400 866 388 845 364 820 360 802 341 787 355 760 352 748 338 738 330 718 336 703 331 693 342 682 356 681 374 686 382 675 395 660 388 644 362 637 355 626 330 612 298 597 295 592 240 588 221 585 214 607 200 602 183 597 192 583 180 577 158 583 152 595 137 610 122 602 110 606 107 622 86 642 72 615 81 600 81 575 75 555 82 518 58 475 50 425 62 380 75 363 103 358 115 345 115 320 100 290 86 285 91 278 72 255 65 238"/>
        </g>
        <path d="M980 312L1172 718.500 786 718.500z" fill="#ff9f18" stroke="#ff9f18" stroke-width="5" stroke-linejoin="round"/>
      </svg>
    </section>
    <div class="split"></div>
    <section class="toolbox">
      <div class="docktitle"><span>工具箱</span><svg><use href="#float"/></svg><svg><use href="#close"/></svg></div>
      <div class="dockbar"><b class="mini"><svg class="i"><use href="#gears"/></svg></b><b class="mini"><svg class="i"><use href="#py"/></svg></b><b><svg class="i"><use href="#clock"/></svg></b><b><svg class="i"><use href="#doc"/></svg></b><i class="sep"></i><b><svg class="i"><use href="#note"/></svg></b><i class="sep"></i><b><svg class="i"><use href="#wrench"/></svg></b></div>
      <div class="search"><svg class="i"><use href="#mag"/></svg><span>搜索<span class="m">...</span></span></div>
      <ul>
        <li><svg class="i"><use href="#clock"/></svg>最近用过</li>
        <li><svg class="i"><use href="#q"/></svg>插值</li>
        <li><svg class="i"><use href="#q"/></svg>矢量创建</li>
        <li><svg class="i"><use href="#q"/></svg>矢量叠加</li>
        <li><svg class="i"><use href="#q"/></svg>矢量分析</li>
        <li><svg class="i"><use href="#q"/></svg>矢量几何图形</li>
        <li><svg class="i"><use href="#q"/></svg>矢量属性表</li>
        <li><svg class="i"><use href="#q"/></svg>矢量通用</li>
        <li><svg class="i"><use href="#q"/></svg>矢量瓦片</li>
        <li><svg class="i"><use href="#q"/></svg>矢量选择</li>
        <li><svg class="i"><use href="#q"/></svg>图表</li>
        <li><svg class="i"><use href="#q"/></svg>图层工具</li>
        <li><svg class="i"><use href="#q"/></svg>网孔</li>
        <li><svg class="i"><use href="#q"/></svg>网络分析</li>
        <li><svg class="i"><use href="#q"/></svg>文件工具</li>
        <li><svg class="i"><use href="#q"/></svg>栅格创建</li>
        <li><svg class="i"><use href="#q"/></svg>栅格地形分析</li>
        <li><svg class="i"><use href="#q"/></svg>栅格分析</li>
        <li><svg class="i"><use href="#q"/></svg>栅格工具</li>
        <li><svg class="i"><use href="#q"/></svg>制图</li>
        <li class="latin"><svg class="i"><use href="#q"/></svg>Database</li>
        <li class="latin"><svg class="i"><use href="#q"/></svg>GPS</li>
        <li class="latin hover"><svg class="i"><use href="#gdal"/></svg>GDAL</li>
        <li class="latin"><svg class="i"><use href="#grass"/></svg>GRASS</li>
      </ul>
      <div class="tabs"><span>图层样式</span><span class="cur">工具箱</span></div>
    </section>
  </main>

  <footer class="status">
    <div class="find"><svg class="i"><use href="#mag"/></svg><span>搜索 <span class="m">(Ctrl+K)</span></span></div>
    <div class="right">
      <span class="l1">坐标</span><div class="field f1 m">5192928,167587</div><svg class="i mouse"><use href="#mouse"/></svg>
      <span class="l2">比例</span><div class="field f2"><span class="m">1:1506580</span><i class="combo"></i></div><svg class="lock"><use href="#lock"/></svg>
      <span class="l3">放大镜</span><div class="field f3"><span class="m">100%</span><i class="ud"></i></div>
      <span class="l4">旋转角度</span><div class="field f4"><span class="m">0.0°</span><i class="ud"></i></div>
      <i class="cb"><svg viewBox="0 0 12 12"><path d="M2 5.500l2.800 4L10 2" fill="none" stroke="#000" stroke-width="1.800"/></svg></i><span class="l5">渲染</span><svg class="i crs"><use href="#crs"/></svg><span class="m epsg">EPSG:4552</span><svg class="i chat"><use href="#chat"/></svg>
    </div>
  </footer>
</div>

<div class="taskbar"><i class="t0"></i><i class="t1"></i><i class="t2"><i class="head"></i></i><i class="t3"></i><i class="t4"></i><i class="t5"></i><span class="time">15:38</span><i class="t6"></i></div>

<div class="popup">
  <div>地理处理工具(<u>G</u>)</div><div class="hot">几何图形工具(<u>E</u>)</div><div>分析工具(<u>A</u>)</div><div>研究工具(<u>R</u>)</div><div>数据管理工具(<u>D</u>)</div>
</div>
<svg class="arrow" viewBox="195 80 140 132"><path d="M332 85.500L306 92l6.500 4.500L199.500 207.500 319.800 104.200l5 4.800z" fill="#ff2a17"/></svg>
</div>
</body>
</html>
```
FILE: styles.css
```css
* { box-sizing: border-box; }
body { margin: 0; overflow: hidden; font: 12px/16px "Noto Sans", "Noto Sans CJK SC", sans-serif; color: #000; }
i, em { font-style: normal; }
b { font-weight: normal; }
u { text-underline-offset: 1px; }
.defs { position: absolute; width: 0; height: 0; }
.i { width: 16px; height: 16px; flex: none; overflow: visible; }
.m { font-family: "Liberation Mono", monospace; font-size: 11px; letter-spacing: -.6px; }

.screen { position: relative; width: 1928px; height: 1048px; display: grid; grid-template: 1040px 8px / 8px 1920px; overflow: hidden; }
.desktop { background: #0440b4; }
.window { display: flex; flex-direction: column; background: #efefef; }

.title { height: 23px; background: #fff; display: flex; align-items: center; padding-left: 2px; }
.title span { margin-left: 5px; }
.wbtn { width: 110px; height: 14px; margin: -3px 10px 0 auto; }
.menubar { height: 22px; padding-left: 6px; display: grid; grid-template-columns: 51px 53px 54px 52px 53px 53px 56px 54px 67px 61px 58px 78px 60px; line-height: 22px; border-bottom: 1px solid #cfcfcf; white-space: nowrap; }
.menubar span { padding-left: 4px; height: 22px; }
.menubar .active { background: #0078d7; color: #fff; width: 50px; }

.bar { height: 31px; display: flex; align-items: center; background: linear-gradient(#fafafa, #eeeeee); border-bottom: 1px solid #b4b4b4; }
.bar.last { height: 30px; }
.bar b, .dockbar b { position: relative; width: 25px; height: 24px; display: flex; align-items: center; justify-content: center; flex: none; }
.bar b.dd, .dockbar b.dd { width: 37px; padding-right: 12px; }
.dd::after { content: ""; position: absolute; left: 27px; top: 10px; border: 4px solid transparent; border-top-color: #555; border-bottom: 0; }
.mini::after { content: ""; position: absolute; right: 0; bottom: 2px; border: 3px solid transparent; border-top-color: #555; border-bottom: 0; }
.bar .off::after { border-top-color: #aaa; }
.bar b.on { background: #dedede; box-shadow: inset 0 0 0 1px #a8a8a8; border-radius: 3px; }
.h { width: 16px; height: 17px; flex: none; background: repeating-linear-gradient(#b3b3b3 0 1px, transparent 1px 3px) 8px 0 / 1px 100% no-repeat, repeating-linear-gradient(#b3b3b3 0 1px, transparent 1px 3px) 11px 0 / 1px 100% no-repeat; }
.h.first { width: 12.5px; background-position: 5px 0, 8px 0; }
.sep { width: 8px; height: 11px; flex: none; background: linear-gradient(#cacaca, #cacaca) 4px 0 / 1px 100% no-repeat; }
.gap1 { width: 150px; }
.gap2 { width: 161px; }
.gap3 { width: 143px; }

.work { height: 875px; display: flex; }
.layers { width: 292px; display: flex; flex-direction: column; }
.docktitle { height: 21px; display: flex; align-items: center; gap: 2px; padding: 0 2px 0 4px; }
.docktitle span { margin-right: auto; }
.docktitle svg { width: 12px; height: 12px; }
.dockbar { height: 30px; display: flex; align-items: center; padding: 0 0 2px 3.500px; }
.tree { flex: 1; border: 1px solid #b0b0b0; background: #fff; }
.row { height: 19px; display: flex; align-items: center; padding-left: 23px; }
.row > span { margin-top: -1px; }
.cb { width: 14px; height: 14px; border: 1px solid #bababa; background: #fff; display: block; flex: none; }
.cb svg { width: 12px; height: 12px; display: block; }
.sw { width: 16px; height: 16px; margin: 0 6px; border: 1px solid #444; flex: none; }
.orange { background: #ff9f18; border-color: #b87826; }
.green { background: #bbcc4c; border-color: #68752a; }
.brown { background: #91522d; border-color: #512e1a; }
.line { height: 2px; border: 0; background: #e3a3a5; }
.picked { background: linear-gradient(90deg, #0078d7 20%, #1683dc 25%, #0f80db); color: #fff; }
.picked span { text-decoration: underline; text-underline-offset: 2px; font-weight: 500; }
.bold span { font-weight: 700; }
.row em { margin-left: auto; margin-right: 10px; width: 18px; height: 18px; background: #f5f5f5; border: 1px solid #ddd; display: flex; align-items: center; justify-content: center; }
.dim span { color: #888; font-style: italic; font-weight: 600; letter-spacing: .2px; }
.split { width: 6px; flex: none; background: repeating-linear-gradient(#b5b5b5 0 1px, transparent 1px 3px) 3px 431px / 1px 16px no-repeat; }

.map { width: 1318px; height: 874px; margin-top: 1px; border: 1px solid #b0b0b0; border-top: 0; background: #fff; display: flex; flex-direction: column; }
.msg { height: 28px; margin: 0 -1px; background: #dff0d8; border: 1px solid #8c9a86; display: flex; align-items: center; padding-left: 9px; }
.msg .ok { width: 18px; }
.msg .txt { margin-left: 143px; }
.msg a { color: #218100; text-decoration: underline; text-underline-offset: 2px; white-space: nowrap; }
.spin { margin-left: auto; display: flex; flex-direction: column; gap: 2px; }
.spin i { width: 13px; height: 9px; border: 1px solid #fff; border-right: 2px solid #777; border-bottom: 2px solid #777; background: radial-gradient(circle, #8fa089 1px, #dff0d8 1.500px); }
.msg .x { width: 18px; height: 18px; margin: -2px 22px 0 31px; }
.canvas { width: 1316px; height: 845px; display: block; }

.toolbox { width: 298px; display: flex; flex-direction: column; }
.search { height: 22px; flex: none; border: 1px solid #a8a8a8; border-radius: 3px; background: #fff; display: flex; align-items: center; padding-left: 6px; color: #777; }
.search > span { margin-left: 6px; }
.toolbox ul { height: 778px; margin: 0; padding: 0; list-style: none; border: 1px solid #b0b0b0; background: #fff; }
.toolbox li { height: 19px; display: flex; align-items: center; padding: 0 0 1px 8px; }
.toolbox li::before { content: ""; border: 4px solid transparent; border-left: 5px solid #555; border-right: 0; margin-right: 10px; }
.toolbox li .i { margin-right: 6px; }
.toolbox .latin { letter-spacing: .3px; }
.hover { background: #efefef; }
.tabs { height: 23px; margin-top: 1px; display: flex; align-items: flex-start; border-top: 1px solid #b0b0b0; line-height: 20px; }
.tabs span { width: 73px; height: 20px; text-align: center; background: #dcdcdc; border: 1px solid #b5b5b5; border-top: 0; border-radius: 0 0 3px 3px; }
.tabs .cur { width: 58px; height: 22px; margin: -1px 0 0 -1px; background: #f8f8f8; line-height: 23px; }

.status { height: 28px; display: flex; align-items: center; padding-left: 4px; }
.find { width: 200px; height: 22px; border: 1px solid #a8a8a8; border-radius: 3px; background: #fff; display: flex; align-items: center; padding-left: 7px; color: #777; }
.find > span { margin-left: 6px; white-space: pre; }
.right { margin-left: 956px; display: flex; align-items: center; }
.field { height: 22px; border: 1px solid #a8a8a8; border-radius: 3px; background: #fff; display: flex; align-items: center; }
.l1 { width: 25px; }
.f1 { width: 99px; padding-left: 7px; }
.mouse { margin-left: 4px; }
.l2 { width: 24px; margin-left: 14px; }
.f2 { width: 83px; padding-left: 4px; }
.combo { width: 20px; height: 20px; margin-left: auto; border-left: 1px solid #b5b5b5; position: relative; }
.combo::after { content: ""; position: absolute; left: 5px; top: 8px; border: 4px solid transparent; border-top: 5px solid #555; border-bottom: 0; }
.lock { width: 12px; height: 16px; margin-left: 12px; }
.l3 { width: 36px; margin-left: 9px; }
.f3 { width: 89px; height: 20px; padding-left: 5px; }
.ud { width: 14px; height: 18px; margin-left: auto; border-left: 1px solid #b5b5b5; display: flex; flex-direction: column; justify-content: center; align-items: center; gap: 4px; }
.ud::before, .ud::after { content: ""; border: 4px solid transparent; }
.ud::before { border-top: 0; border-bottom-color: #555; }
.ud::after { border-bottom: 0; border-top-color: #555; }
.l4 { width: 48px; margin-left: 9px; }
.f4 { width: 89px; height: 20px; margin-left: 5px; padding-left: 5px; }
.right > .cb { margin-left: 6px; }
.l5 { width: 24px; margin-left: 5px; }
.crs { width: 15px; margin-left: 14px; }
.epsg { margin-left: 2px; }
.chat { margin-left: 29px; }

.taskbar { grid-column: 1 / 3; height: 8px; overflow: hidden; display: flex; background: linear-gradient(90deg, #cde6ee 0 23%, #cfe2ec 65%, #d0dcea 80%, #d5d9e6); }
.t0 { width: 8px; background: #d3d9e8; }
.t1 { width: 48px; }
.t2 { width: 288px; border: 1px solid #c8c8c8; border-bottom: 0; background: #fff; padding: 3px 0 0 216px; overflow: hidden; }
.head { display: block; width: 20px; height: 12px; border-radius: 10px; background: #c09a86; border: 1px solid #554; }
.t3 { width: 51px; }
.t4 { width: 44px; background: #e0eff6; }
.t5 { width: 348px; border-left: 1px solid #c3ced5; }
.time { margin-left: auto; margin-right: 70px; line-height: 12px; padding-top: 4px; height: 20px; }
.t6 { width: 5px; border-left: 1px solid #aab; }

.popup { position: absolute; left: 330px; top: 45px; width: 162px; height: 125px; padding: 0; background: #fff; border: 1px solid #979797; box-shadow: 3px 3px 3px rgba(0, 0, 0, .45); }
.popup div { position: relative; height: 25px; line-height: 25px; padding-left: 27px; }
.popup div:first-child { height: 24px; line-height: 24px; }
.popup .hot { background: #0078d7; color: #fff; box-shadow: inset 0 1px #42a5f0, inset 0 -1px #42a5f0; }
.popup div::after { content: ""; position: absolute; right: 5px; top: 7px; border: 4px solid transparent; border-left: 4px solid #444; border-right: 0; }
.popup .hot::after { border-left-color: #a8d3f5; }
.arrow { position: absolute; left: 195px; top: 80px; width: 140px; height: 132px; }
```
